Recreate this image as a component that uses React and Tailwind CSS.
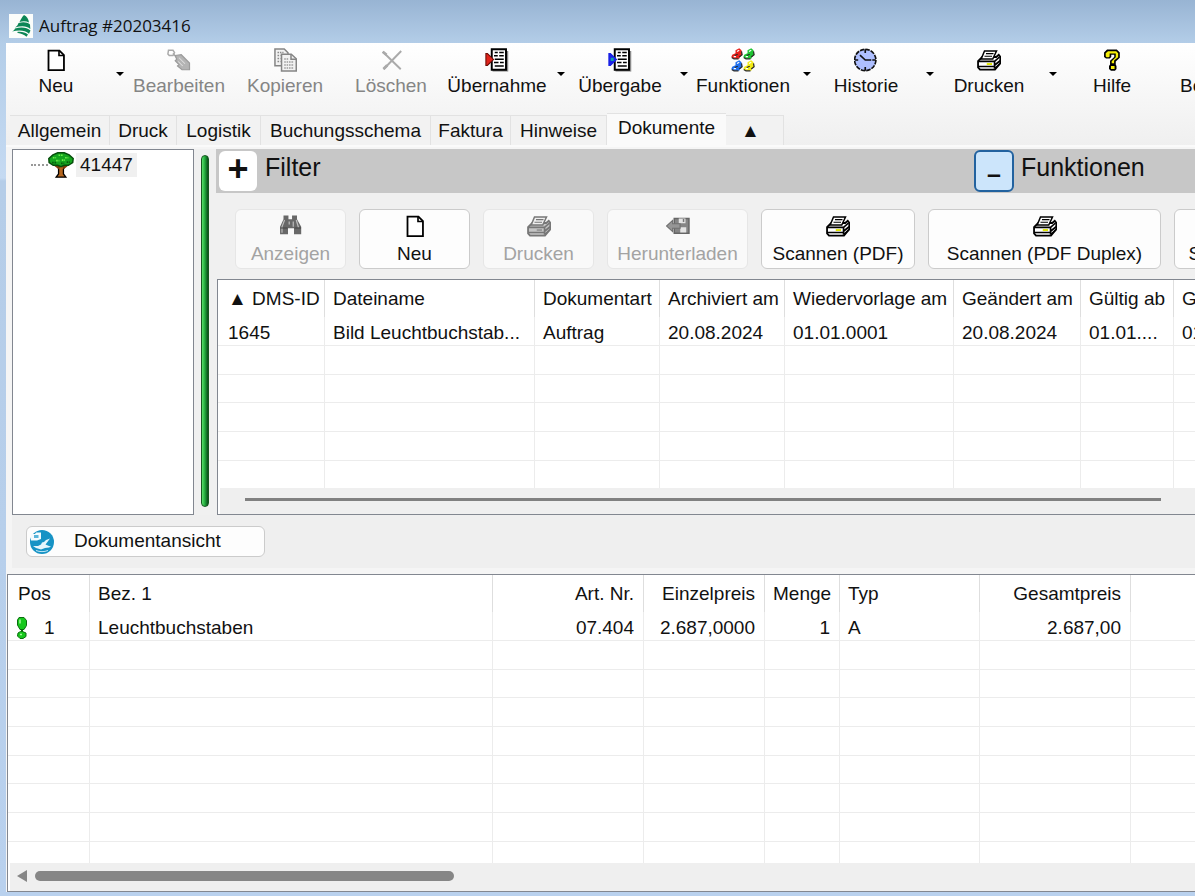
import React, { useState } from 'react';
import clsx from 'clsx';

/* ---------- Icons ---------- */

const Svg = ({ className, children, viewBox = '0 0 16 16' }) => (
    <svg className={clsx('shrink-0', className)} viewBox={viewBox} fill="none" aria-hidden="true">
        {children}
    </svg>
);

const LogoIcon = () => (
    <Svg className="h-6 w-6 bg-[#fbfdfb]" viewBox="0 0 24 24">
        <path d="M15 1c3 1.500 4.500 4 5 7.500-3-1.500-6-1.500-9.500-.5C12 5 13 3 15 1z" fill="#0c8656" />
        <path d="M9.500 9c4.500-1.500 9-1 11.500 1.500l.3 4.500C18 12 13 11.500 6 13.500 8 12 9 11 9.500 9z" fill="#0c8656" />
        <path d="M6 14.500c6-2 12-1.300 15.500 2l-1.500 3.200C16 16 10 15.800 3 17.500 4.500 16.700 5.500 15.800 6 14.500z" fill="#0c8656" />
        <path d="M8 18c4.500-.5 8 .2 11 2.500l-1.500 2.300c-2.500-2.300-5.500-3-8.500-3.800z" fill="#0c8656" />
    </Svg>
);

const NewIcon = () => (
    <Svg className="h-6 w-6">
        <path d="M3 1.700h7.300l3 3v10H3z" fill="#fff" stroke="#000" strokeWidth="1.200" />
        <path d="M10 1.700v3.300h3.300" stroke="#000" strokeWidth="1.100" />
    </Svg>
);

const EditIcon = () => (
    <Svg className="h-6 w-6">
        <path d="M1 1.500h3l1 1.500-1 2H1.500L.6 4z" stroke="#aaa" />
        <path d="M4 3.500l2.500 3" stroke="#aaa" />
        <path d="M5.500 5l4-.5 5.500 5.500v4.500h-5L7 12l1-1-2.500-2.500 1-1z" fill="#b4b4b4" stroke="#9b9b9b" strokeWidth=".8" />
        <path d="M8 6.500l4 4M7.500 9l3 3" stroke="#dedede" strokeWidth=".7" />
    </Svg>
);

const CopyIcon = () => (
    <Svg className="h-6 w-6">
        <path d="M1.300.7H7.500L10 3.200v8.600H1.300z" fill="#f2f2f2" stroke="#858585" />
        <path d="M3 3h4M3 5h2M3 7h2M3 9h2" stroke="#8a8a8a" strokeDasharray="1 .6" />
        <path d="M5.700 4.200h6.500l3.300 3v8.200H5.700z" fill="#f2f2f2" stroke="#858585" />
        <path d="M12 4.500v3h3.500" stroke="#858585" />
        <path d="M7.500 7.300h3M7.500 9.300H14M7.500 11.300H14M7.500 13.300H14" stroke="#9a9a9a" strokeDasharray="1 .6" />
    </Svg>
);

const DeleteIcon = () => (
    <Svg className="h-6 w-6">
        <path d="M2.500 2.500l12 11.700M14.800 2L3 14.200" stroke="#aaa" strokeWidth="1.300" />
        <path d="M2.500 2.500l2.500 2M3 14l2.500-2.500" stroke="#aaa" strokeWidth="1.900" />
    </Svg>
);

const BookIcon = ({ arrow, inner, edge }) => (
    <Svg className="h-6 w-6">
        <path d="M5 2h10.500v13.700H5z" fill="#8b8b8b" />
        <path d="M4.500.8h9.500v13.700H4.500z" fill="#fff" stroke="#000" strokeWidth="1.300" />
        <path d="M6.500 3h2M9.500 3h3M6 5.200h2.500M9.500 5.200h3M6.500 7.500h6M6 9.700h3M10 9.700h2.500M6.500 12h6" stroke="#000" />
        <path d="M.6 3.700h1L5.700 7.600l-4.100 4h-1z" fill={arrow} stroke={edge} strokeWidth=".7" />
        <path d="M1.800 6.500h2v2.200h-2z" fill={inner} />
    </Svg>
);

const FunctionsIcon = () => {
    const blobs = [
        { x: 0, y: 0, fill: '#e8211c' },
        { x: 8, y: 0, fill: '#1fc433' },
        { x: 0, y: 8, fill: '#1d6ff0' },
        { x: 8, y: 8, fill: '#f3ea16' },
    ];
    return (
        <Svg className="h-6 w-6">
            {blobs.map((b) => (
                <g key={b.fill} transform={`translate(${b.x} ${b.y})`}>
                    <path d="M3 1.500L5.500.2 7 1.500l.5 3L6 6l-.5 1.200H1.500L.2 6l.6-1.500L3 3.500z" fill={b.fill} />
                    <path d="M7 2.200l.4 2.300L5.500 6M.5 6.300l1.500 1h3M4.500 4.200L2.500 5" stroke="#2a2a2a" strokeWidth=".8" />
                    <path d="M4 2.300l1.500-.8M1.800 5.700h1.500" stroke="#fff" strokeWidth=".8" />
                </g>
            ))}
        </Svg>
    );
};

const ClockIcon = () => (
    <Svg className="h-6 w-6">
        <circle cx="7.500" cy="8" r="7.100" fill="#aebfff" stroke="#111" strokeWidth="1.100" strokeDasharray="3 .7" />
        <path d="M7.500 .8v2.500M7.500 12.700v2.500M.5 8h2.300M12.200 8h2.300M4 4.800L7.500 8h4" stroke="#111" strokeWidth="1.100" />
    </Svg>
);

const PrinterIcon = ({ disabled }) => {
    const line = disabled ? '#777' : '#000';
    const fill = disabled ? '#c4c4c4' : '#fff';
    return (
        <Svg className="h-6 w-6">
            <path d="M.7 8.800L3.500 6h9.300l1.700-1.500 1 1.300v4.400L12 14.400H2L.7 12.900z" fill={fill} stroke={line} strokeWidth="1.200" />
            <path d="M5 2h8l-2.500 5.300H2.800z" fill={disabled ? '#eee' : '#fff'} stroke={line} />
            <path d="M6 3.800h5M5 5.500h5" stroke={line} strokeWidth=".8" />
            <path d="M.7 8.900h11M.7 12.300h11M11.700 9v4.800M11.700 8.900L15 6M11.700 11.500L15.400 8.500M12 13.500l3.300-3" stroke={line} strokeWidth="1.100" />
            <path d="M6.500 10.700h3.500" stroke={disabled ? '#999' : '#dfe600'} strokeWidth="1.300" />
        </Svg>
    );
};

const HelpIcon = () => (
    <Svg className="h-6 w-6">
        <path d="M2.700 3l2-2h6.500l2 2v3.500L10.500 9v2l.5 1v2l-1 1.200H7.300L6 14v-2l.7-1V8.500L9.500 6V4.500h-2V6L6.500 7H4L2.700 6z" fill="#000" />
        <path d="M3.800 3.500l1.500-1.400h5.500l1.300 1.400v2.600L9.400 8.400v1.800H7.800V8.800l2.700-2.600V3.600H6.400v2l-.6.500H4.400l-.6-.6zM7.300 12h2.400v2H7.300z" fill="#f5ee0a" />
    </Svg>
);

const TreeIcon = () => (
    <Svg className="h-[26px] w-[26px]">
        <path d="M6 8h4.500l-1 2.500v3l1.500 2H5l1.500-2v-3z" fill="#b5651d" stroke="#000" strokeWidth=".8" />
        <path d="M3.500 7.500L7 10M12.500 7.500L9.300 10" stroke="#7a3b0a" strokeWidth="1.400" />
        <path d="M3 1.800L6 .5h4l3 1.300 2.500 2.200-.3 2.500-2.700 1.700H10L8 9 6 8.200H3.200L.7 6.500.5 4z" fill="#14a51e" stroke="#054d0a" strokeWidth=".9" />
        <path d="M3 3.500h2M6.500 2h2.500M10.500 3.500h2M5 5.300h2M8.500 5h2" stroke="#6bef4a" strokeDasharray="1 .5" />
        <path d="M2.500 6.500h2.500M8 7h2M11.500 6.200h2" stroke="#075d0c" strokeDasharray="1 .5" />
    </Svg>
);

const BinocularsIcon = () => (
    <Svg className="h-6 w-6">
        <path d="M3 1h3.300v2.500h2.400V1H12v2.500l2.800 5v5H10V9.500H6v4H.7v-5L3 3.500z" fill="#686868" />
        <path d="M3.700 4L2 8.500v4M9.500 5v3.500M11.500 4l1.500 5M6.800 5v2" stroke="#bdbdbd" strokeWidth=".8" />
        <path d="M1 9.300h4.700M10.300 9.300h4.400" stroke="#444" strokeWidth=".7" />
    </Svg>
);

const DownloadIcon = () => (
    <Svg className="h-6 w-6">
        <path d="M5.500 3h9.800v9.800H5.500z" fill="#858585" stroke="#666" />
        <path d="M8.500 3h4.500v3.200H8.500zM9.500 8.800h4v3.500h-4z" fill="#e4e4e4" />
        <path d="M11.700 3.300v2" stroke="#777" />
        <path d="M.4 8l4-3.700v2.200h5v3h-5v2.200z" fill="#969696" stroke="#707070" strokeWidth=".7" />
    </Svg>
);

const ViewIcon = () => (
    <Svg className="h-6 w-6" viewBox="0 0 24 24">
        <circle cx="12" cy="12" r="12" fill="#1793c5" />
        <path d="M1 4h4l1-1.500h5V9l-4 1.500H1z" fill="#f4fbfe" />
        <path d="M4 5h4.500v3H4z" fill="#5ab5da" />
        <path d="M20 8.500l-4.500 6 3.500 1.500 2 .5-2 1-4 .5-4 1.500-5-1.500-3-2h5l3-1.500 1-2 2-.5 2-2z" fill="#e6f6fc" />
        <path d="M6 20.500c4 1.500 8 1.500 12 0" stroke="#bfe6f5" />
    </Svg>
);

const AlertIcon = () => (
    <Svg className="h-6 w-3" viewBox="0 0 12 24">
        <path d="M3 1.500h5l2.500 3v5l-2.500 4H4L1.500 9V4z" fill="#17c81d" stroke="#0a6d0e" />
        <path d="M2 17l2.500-1.500h2l3.500 1.500v3.500L7 22.500H4L1.500 20z" fill="#17c81d" stroke="#0a6d0e" />
        <path d="M6 13v3" stroke="#0a6d0e" strokeWidth="2" />
        <path d="M4 3.500v4M4 18.500h2" stroke="#a5f79b" strokeWidth="1.500" />
    </Svg>
);

const Caret = () => (
    <Svg className="h-1 w-2" viewBox="0 0 8 4">
        <path d="M0 0h8L4 4z" fill="#000" />
    </Svg>
);

/* ---------- Data ---------- */

const tools = [
    { label: 'Neu', icon: <NewIcon />, menu: true },
    { label: 'Bearbeiten', icon: <EditIcon />, disabled: true },
    { label: 'Kopieren', icon: <CopyIcon />, disabled: true },
    { label: 'Löschen', icon: <DeleteIcon />, disabled: true },
    { label: 'Übernahme', icon: <BookIcon arrow="#e0241b" inner="#e0241b" edge="#6b0d08" />, menu: true },
    { label: 'Übergabe', icon: <BookIcon arrow="#1a22e6" inner="#13a0a8" edge="#1a22e6" />, menu: true },
    { label: 'Funktionen', icon: <FunctionsIcon />, menu: true },
    { label: 'Historie', icon: <ClockIcon />, menu: true },
    { label: 'Drucken', icon: <PrinterIcon />, menu: true },
    { label: 'Hilfe', icon: <HelpIcon /> },
    { label: 'Beenden', icon: <DeleteIcon /> },
];

const tabs = [
    { label: 'Allgemein', width: 'w-[100px]' },
    { label: 'Druck', width: 'w-[67px]' },
    { label: 'Logistik', width: 'w-[84px]' },
    { label: 'Buchungsschema', width: 'w-[170px]' },
    { label: 'Faktura', width: 'w-[80px]' },
    { label: 'Hinweise', width: 'w-[96px]' },
    { label: 'Dokumente', width: 'w-[119px]' },
    { label: '▲', width: 'w-[58px] pr-2' },
];

const actions = [
    { label: 'Anzeigen', icon: <BinocularsIcon />, width: 'w-[111px]', disabled: true },
    { label: 'Neu', icon: <NewIcon />, width: 'w-[111px]' },
    { label: 'Drucken', icon: <PrinterIcon disabled />, width: 'w-[111px]', disabled: true },
    { label: 'Herunterladen', icon: <DownloadIcon />, width: 'w-[141px]', disabled: true },
    { label: 'Scannen (PDF)', icon: <PrinterIcon />, width: 'w-[154px]' },
    { label: 'Scannen (PDF Duplex)', icon: <PrinterIcon />, width: 'w-[233px]' },
    { label: 'Scannen (TIFF)', icon: <PrinterIcon />, width: 'w-[162px]' },
];

const docColumns = [
    { label: '▲ DMS-ID', width: 'w-[107px]' },
    { label: 'Dateiname', width: 'w-[210px]' },
    { label: 'Dokumentart', width: 'w-[125px]' },
    { label: 'Archiviert am', width: 'w-[125px]' },
    { label: 'Wiedervorlage am', width: 'w-[169px]' },
    { label: 'Geändert am', width: 'w-[127px]' },
    { label: 'Gültig ab', width: 'w-[93px]' },
    { label: 'Gültig bis', width: 'w-[93px]' },
];

const docRows = [
    ['1645', 'Bild Leuchtbuchstab...', 'Auftrag', '20.08.2024', '01.01.0001', '20.08.2024', '01.01....', '01.01....'],
];

const posColumns = [
    { label: 'Pos', width: 'w-[82px]' },
    { label: 'Bez. 1', width: 'w-[403px]' },
    { label: 'Art. Nr.', width: 'w-[151px]', right: true },
    { label: 'Einzelpreis', width: 'w-[121px]', right: true },
    { label: 'Menge', width: 'w-[75px]', right: true },
    { label: 'Typ', width: 'w-[140px]' },
    { label: 'Gesamtpreis', width: 'w-[151px]', right: true },
    { label: '', width: '' },
];

const posRows = [
    [
        <span className="-ml-0.5 flex items-center gap-4"><AlertIcon />1</span>,
        'Leuchtbuchstaben', '07.404', '2.687,0000', '1', 'A', '2.687,00', '',
    ],
];

/* ---------- Parts ---------- */

const DataGrid = ({ columns, rows, emptyRows, className }) => (
    <table className={clsx('table-fixed border-separate border-spacing-0', className)}>
        <colgroup>
            {columns.map((c, i) => <col key={i} className={c.width} />)}
        </colgroup>
        <thead>
            <tr className="h-[37px]">
                {columns.map((c, i) => (
                    <th
                        key={i}
                        className={clsx(
                            'border-r border-[#dedede] py-0 pr-[9px] pl-2 font-normal whitespace-nowrap leading-6 first:pr-0 first:pl-[10px] last:border-r-0',
                            c.right ? 'text-right' : 'text-left'
                        )}
                    >
                        {c.label}
                    </th>
                ))}
            </tr>
        </thead>
        <tbody>
            {rows.map((row, r) => (
                <tr key={r} className="h-[29px]">
                    {row.map((cell, i) => (
                        <td
                            key={i}
                            className={clsx(
                                'border-r border-b border-[#ececec] pt-1 pr-[9px] pb-0 pl-2 whitespace-nowrap leading-6 first:pl-[10px] last:border-r-0',
                                columns[i].right ? 'text-right' : 'text-left'
                            )}
                        >
                            {cell}
                        </td>
                    ))}
                </tr>
            ))}
            {Array.from({ length: emptyRows }, (_, r) => (
                <tr key={`e${r}`} className="h-[29px] nth-[3n]:h-7">
                    {columns.map((c, i) => (
                        <td key={i} className="border-r border-b border-[#ececec] p-0 last:border-r-0" />
                    ))}
                </tr>
            ))}
        </tbody>
    </table>
);

const Toolbar = () => (
    <div className="-ml-[3px] flex h-[70px] shrink-0">
        {tools.map((t) => (
            <div key={t.label} className="flex shrink-0">
                <button
                    disabled={t.disabled}
                    className={clsx('flex w-[106px] flex-col items-center pt-[5px]', t.disabled && 'text-[#858585]')}
                >
                    {t.icon}
                    <span className="mt-0.5 leading-6">{t.label}</span>
                </button>
                {t.menu && (
                    <button aria-label={`${t.label} Menü`} className="flex w-[17px] justify-end pt-[29px] pr-0.5">
                        <Caret />
                    </button>
                )}
            </div>
        ))}
    </div>
);

const TabBar = ({ active, onChange }) => (
    <div role="tablist" className="flex h-[34px] shrink-0 items-end border-b-2 border-[#fafafa] pl-1">
        {tabs.map((t) => (
            <button
                key={t.label}
                role="tab"
                aria-selected={active === t.label}
                onClick={() => onChange(t.label)}
                className={clsx(
                    'shrink-0 border-[#e2e2e2] leading-6',
                    t.width,
                    active === t.label
                        ? 'h-8 self-start border-t bg-[#fafafa] pb-1'
                        : 'h-[30px] border-t border-r bg-[#f2f2f2]'
                )}
            >
                {t.label}
            </button>
        ))}
    </div>
);

export default function App() {
    const [tab, setTab] = useState('Dokumente');

    return (
        <div className="flex h-screen flex-col overflow-hidden bg-[#b9d1ee] bg-[linear-gradient(#98b4d3,#b3cde8_43px,#c5daf2_178px,#b5cde8_181px,#b9d1ee)] pb-1 pl-1.5 font-['Liberation_Sans',Arial,sans-serif] text-[19px] text-[#111]">
            <header className="flex h-[43px] shrink-0 items-center gap-1.5 pt-[9px] pl-[3px]">
                <LogoIcon />
                <h1 className="font-['Open_Sans','Noto_Sans',sans-serif] text-[17px] leading-6">Auftrag #20203416</h1>
            </header>

            <main className="flex min-h-0 flex-1 flex-col overflow-hidden bg-[#f5f5f5]">
                <div className="shrink-0 bg-linear-to-b from-white to-[#efefef]">
                    <Toolbar />
                    <TabBar active={tab} onChange={setTab} />
                </div>

                <section className="flex shrink-0 flex-col pt-0.5 pl-1.5">
                    <div className="flex h-[366px] bg-[#f0f0f0]">
                        {/* Tree */}
                        <div className="w-[182px] shrink-0 border border-[#828790] bg-white pt-0.5 pl-[18px]">
                            <div className="flex items-center">
                                <span className="w-[17px] border-t-2 border-dotted border-[#999]" />
                                <TreeIcon />
                                <span className="ml-0.5 bg-[#f0f0f0] px-1 leading-6">41447</span>
                            </div>
                        </div>

                        {/* Splitter */}
                        <div className="mx-[7px] mt-1.5 mb-2 w-2 shrink-0 rounded-full border border-[#14591f] bg-linear-to-r from-[#58e06c] via-[#1ea83a] to-[#0b4a1a]" />

                        <div className="flex min-w-0 flex-1 flex-col">
                            <div className="flex h-11 shrink-0 bg-[#c7c7c7] text-[25px]">
                                <div className="flex w-[758px] shrink-0 pt-0.5 pl-[3px]">
                                    <button aria-label="Filter aufklappen" className="h-10 w-[38px] rounded-md bg-white pb-1 text-[36px] leading-9 font-bold">+</button>
                                    <h2 className="ml-2 leading-8">Filter</h2>
                                </div>
                                <div className="flex pt-px">
                                    <button aria-label="Funktionen zuklappen" className="h-[42px] w-10 rounded-md border-2 border-[#22629f] bg-[#cce5fb] pt-1 font-bold">–</button>
                                    <h2 className="ml-[7px] pt-px leading-8">Funktionen</h2>
                                </div>
                            </div>

                            <div className="flex h-[86px] shrink-0 gap-[13px] overflow-hidden pt-4 pl-[19px]">
                                {actions.map((a) => (
                                    <button
                                        key={a.label}
                                        disabled={a.disabled}
                                        className={clsx(
                                            'flex h-[60px] shrink-0 flex-col items-center rounded-md border pt-1',
                                            a.width,
                                            a.disabled
                                                ? 'border-[#e6e6e6] bg-[#f9f9f9] text-[#a3a3a3]'
                                                : 'border-[#cbcbcb] bg-[#fdfdfd]'
                                        )}
                                    >
                                        {a.icon}
                                        <span className="mt-1 leading-6 whitespace-nowrap">{a.label}</span>
                                    </button>
                                ))}
                            </div>

                            <div className="ml-px flex min-h-0 flex-1 flex-col overflow-hidden border border-r-0 border-[#828790] bg-white">
                                <div className="min-h-0 flex-1 overflow-hidden">
                                    <DataGrid columns={docColumns} rows={docRows} emptyRows={5} className="w-[1049px]" />
                                </div>
                                <div className="ml-0.5 flex h-[26px] shrink-0 items-center bg-[#efefef] pr-[34px] pb-1 pl-[25px]">
                                    <div className="h-[3px] flex-1 bg-[#808080]" />
                                </div>
                            </div>
                        </div>
                    </div>

                    <div className="bg-[#efefef] py-[11px] pl-3.5">
                        <button className="flex h-[31px] w-[239px] items-center gap-5 rounded-md border border-[#cbcbcb] bg-[#fdfdfd] pl-[3px]">
                            <ViewIcon />
                            Dokumentansicht
                        </button>
                    </div>
                </section>

                {/* Positions */}
                <section className="mt-1.5 ml-px flex min-h-0 flex-1 flex-col border border-r-0 border-[#828790] bg-white">
                    <div className="min-h-0 flex-1 overflow-hidden">
                        <DataGrid columns={posColumns} rows={posRows} emptyRows={8} className="w-full" />
                    </div>
                    <div className="ml-0.5 flex h-7 shrink-0 items-center gap-2 bg-[#efefef] pb-0.5 pl-[7px]">
                        <Svg className="h-3 w-[10px]" viewBox="0 0 10 12">
                            <path d="M10 0v12L0 6z" fill="#868686" />
                        </Svg>
                        <div className="h-[10px] w-[419px] rounded-full bg-[#868686]" />
                    </div>
                </section>
            </main>
        </div>
    );
}
